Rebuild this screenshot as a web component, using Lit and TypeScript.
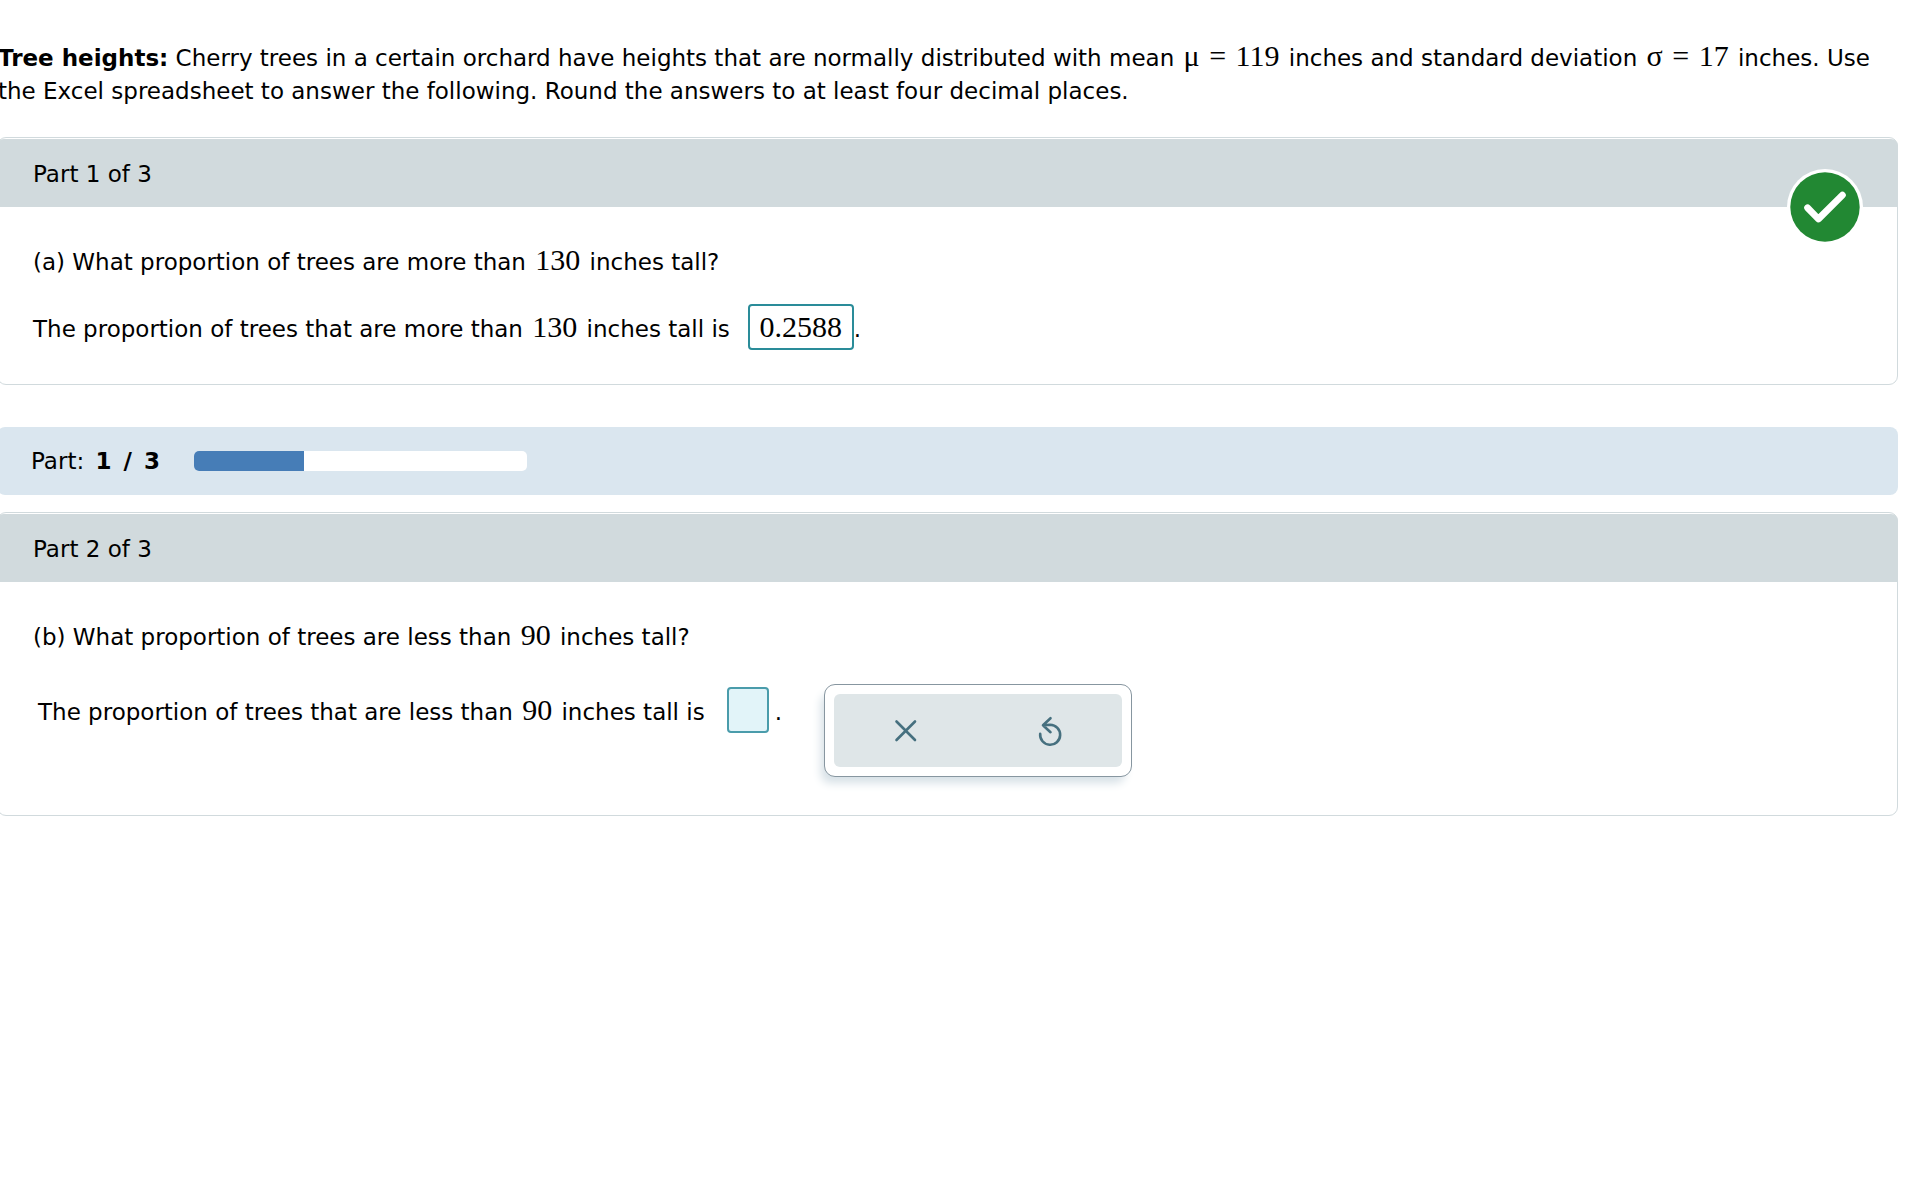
import { LitElement, html, css } from "lit";
import { customElement, property } from "lit/decorators.js";

@customElement("part-card")
export class PartCard extends LitElement {
  @property() heading = "";
  @property({ type: Boolean }) correct = false;

  static styles = css`
    :host {
      display: block;
    }
    .card {
      position: relative;
      border: 1px solid #d1dadd;
      border-radius: 9px;
      padding-top: 1px;
    }
    .heading {
      margin: 0 -1px;
      padding: 2px 36px 0;
      font: inherit;
      line-height: 66px;
      background: #d1dadd;
      border-radius: 7px 7px 0 0;
    }
    .content {
      padding: 38px 35px 34px;
    }
    .badge {
      position: absolute;
      top: 31px;
      right: 34px;
      width: 76px;
      height: 76px;
      display: block;
    }
  `;

  render() {
    return html`
      <section class="card">
        <h2 class="heading">${this.heading}</h2>
        ${this.correct
          ? html`<svg class="badge" viewBox="0 0 76 76" role="img" aria-label="Correct">
              <circle cx="38" cy="38" r="38" fill="#fff" />
              <circle cx="38" cy="38" r="34.7" fill="#228833" />
              <path d="M20.6 38.8 31.4 50 55.4 26.2" fill="none" stroke="#fff" stroke-width="6.8" stroke-linecap="round" stroke-linejoin="round" />
            </svg>`
          : null}
        <div class="content"><slot></slot></div>
      </section>
    `;
  }
}

@customElement("app-root")
export class AppRoot extends LitElement {
  @property({ type: Number }) done = 1;
  @property({ type: Number }) total = 3;

  static styles = css`
    :host {
      display: block;
      overflow: hidden;
      color: #000;
      background: #fff;
      font-family: Verdana, "DejaVu Sans", sans-serif;
      font-size: 23px;
      line-height: 34px;
    }
    .page {
      margin-left: -3px;
      padding: 42px 32px 40px 0;
    }
    .intro {
      margin: 0 4px 29px 1px;
      line-height: 33px;
    }
    .math {
      margin: 0 2px;
      font-family: "Liberation Serif", serif;
      font-size: 30px;
      line-height: 0;
    }
    .sign {
      margin: 0 2px;
    }
    .line {
      margin: 0;
    }
    .answer {
      display: flex;
      align-items: baseline;
      margin: 25px 0 0;
    }
    .box {
      box-sizing: border-box;
      height: 46px;
      margin: 0 0 0 18px;
      padding: 0 8px;
      border: 2px solid #2a8c99;
      border-radius: 4px;
      outline: none;
      background: #fff;
      color: #000;
      text-align: center;
      font-family: "Liberation Serif", serif;
      font-size: 30px;
    }
    .filled {
      width: 106px;
    }
    .empty {
      width: 42px;
      margin: 0 6px 0 22px;
      background: #e2f4f9;
      border-color: #4a9cab;
    }
    .work {
      display: flex;
      align-items: flex-start;
      gap: 42px;
      margin: 30px 0 4px 5px;
    }
    .work .answer {
      margin: 3px 0 0;
    }
    .tools {
      display: flex;
      box-sizing: border-box;
      width: 308px;
      padding: 9px;
      border: 1px solid #8796a0;
      border-radius: 11px;
      background: #fff;
      box-shadow: -5px 8px 10px -2px #d6e0e6;
    }
    .tool {
      flex: 1;
      display: grid;
      place-items: center;
      height: 73px;
      padding: 0;
      border: 0;
      background: #dfe6e8;
      cursor: pointer;
    }
    .tool:first-child {
      border-radius: 6px 0 0 6px;
    }
    .tool:last-child {
      border-radius: 0 6px 6px 0;
    }
    .icon {
      width: 32px;
      height: 32px;
      fill: none;
      stroke: #46707f;
      stroke-width: 2.6;
      stroke-linecap: round;
      stroke-linejoin: round;
    }
    .progress {
      display: flex;
      align-items: center;
      gap: 34px;
      margin: 42px 0 17px;
      padding: 17px 34px;
      border-radius: 8px;
      background: #dae6ef;
    }
    .count {
      margin-left: 4px;
    }
    .slash {
      margin: 0 4px;
    }
    .track {
      width: 333px;
      height: 20px;
      border-radius: 5px;
      overflow: hidden;
      background: #fff;
    }
    .fill {
      height: 100%;
      background: #467db7;
    }
  `;

  render() {
    return html`
      <main class="page">
        <p class="intro">
          <strong>Tree heights:</strong> Cherry trees in a certain orchard have heights that are
          normally distributed with mean
          <span class="math">μ <span class="sign">=</span> 119</span> inches and standard deviation
          <span class="math">σ <span class="sign">=</span> 17</span> inches. Use the Excel
          spreadsheet to answer the following. Round the answers to at least four decimal places.
        </p>

        <part-card heading="Part 1 of 3" correct>
          <p class="line">
            (a) What proportion of trees are more than <span class="math">130</span> inches tall?
          </p>
          <div class="answer">
            <label for="a">The proportion of trees that are more than <span class="math">130</span> inches tall is</label>
            <input id="a" class="box filled" readonly value="0.2588" />
            <span>.</span>
          </div>
        </part-card>

        <div class="progress">
          <span>Part: <strong class="count">${this.done} <span class="slash">/</span> ${this.total}</strong></span>
          <div class="track" role="progressbar" aria-label="Parts completed" aria-valuemin="0" aria-valuemax=${this.total} aria-valuenow=${this.done}>
            <div class="fill" style="width:${Math.floor((this.done / this.total) * 100)}%"></div>
          </div>
        </div>

        <part-card heading="Part 2 of 3">
          <p class="line">
            (b) What proportion of trees are less than <span class="math">90</span> inches tall?
          </p>
          <div class="work">
            <div class="answer">
              <label for="b">The proportion of trees that are less than <span class="math">90</span> inches tall is</label>
              <input id="b" class="box empty" />
              <span>.</span>
            </div>
            <div class="tools">
              <button class="tool" aria-label="Clear">
                <svg class="icon" viewBox="0 0 32 32"><path d="M6.5 6.5 25 25M25 6.5 6.5 25" /></svg>
              </button>
              <button class="tool" aria-label="Reset">
                <svg class="icon" viewBox="0 0 32 32"><path d="M6.2 18.8A10 10 0 1 0 16.2 9.8L9 10.2M16.5 3.2 9 10.2 16.5 17.2" /></svg>
              </button>
            </div>
          </div>
        </part-card>
      </main>
    `;
  }
}
